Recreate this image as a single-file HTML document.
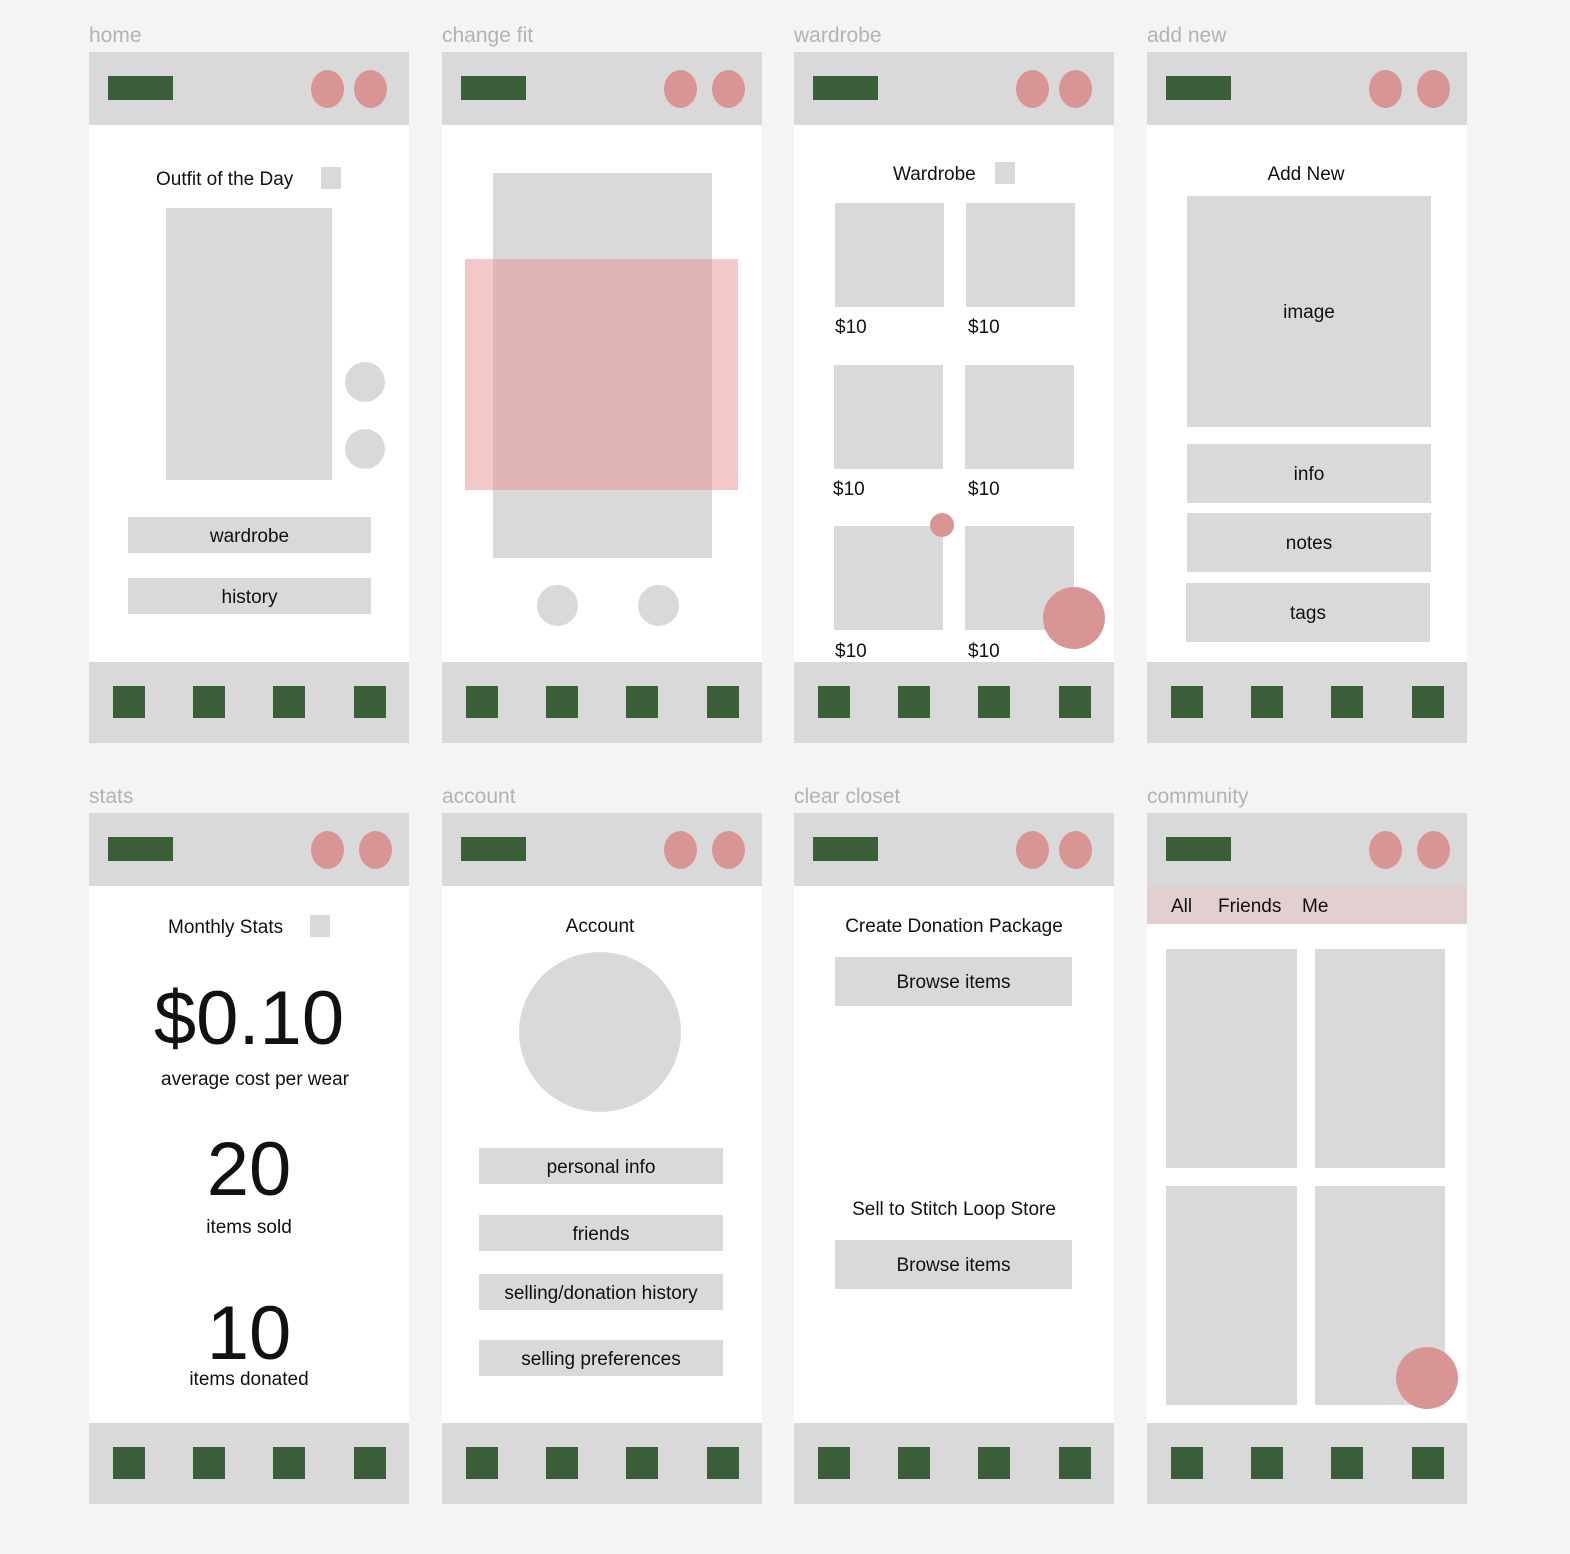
<!DOCTYPE html>
<html><head><meta charset="utf-8"><style>
*{margin:0;padding:0;box-sizing:border-box}
body{width:1570px;height:1554px;background:#f4f4f4;position:relative;overflow:hidden;font-family:"Liberation Sans",sans-serif;color:#111}
.f{position:absolute;width:320px;height:691px;background:#fff}
.lbl{position:absolute;font-size:21px;color:#b3b3b3;top:-28px;left:0}
.hd{position:absolute;left:0;top:0;width:320px;height:73px;background:#d9d9d9}
.g{position:absolute;left:19px;top:24px;width:65px;height:24px;background:#3a5f38}
.o{position:absolute;top:18px;width:33px;height:38px;border-radius:50%;background:#d89594}
.bb{position:absolute;left:0;top:610px;width:320px;height:81px;background:#d9d9d9}
.sq{position:absolute;top:24px;width:32px;height:32px;background:#3a5f38}
.a{position:absolute}
.gr{position:absolute;background:#d9d9d9}
.t{position:absolute;font-size:19px;white-space:nowrap;line-height:22px;margin-top:2px}
.c{left:0;width:320px;text-align:center}
.btn{position:absolute;background:#d9d9d9;font-size:19px;display:flex;align-items:center;justify-content:center;padding-top:3px}
.ci{position:absolute;border-radius:50%;background:#d9d9d9}
.pk{position:absolute;border-radius:50%;background:#d89594}
</style></head><body>

<!-- home -->
<div class="f" style="left:89px;top:52px">
<div class="lbl">home</div>
<div class="hd"><div class="g"></div><div class="o" style="left:222px"></div><div class="o" style="left:265px"></div></div>
<div class="t" style="left:67px;top:115px">Outfit of the Day</div>
<div class="gr" style="left:232px;top:115px;width:20px;height:22px"></div>
<div class="gr" style="left:77px;top:156px;width:166px;height:272px"></div>
<div class="ci" style="left:256px;top:310px;width:40px;height:40px"></div>
<div class="ci" style="left:256px;top:377px;width:40px;height:40px"></div>
<div class="btn" style="left:39px;top:465px;width:243px;height:36px">wardrobe</div>
<div class="btn" style="left:39px;top:526px;width:243px;height:36px">history</div>
<div class="bb"><div class="sq" style="left:24px"></div><div class="sq" style="left:104px"></div><div class="sq" style="left:184px"></div><div class="sq" style="left:265px"></div></div>
</div>

<!-- change fit -->
<div class="f" style="left:442px;top:52px">
<div class="lbl">change fit</div>
<div class="hd"><div class="g"></div><div class="o" style="left:222px"></div><div class="o" style="left:270px"></div></div>
<div class="gr" style="left:51px;top:121px;width:219px;height:385px"></div>
<div class="a" style="left:23px;top:207px;width:273px;height:231px;background:rgba(230,145,145,0.5)"></div>
<div class="ci" style="left:95px;top:533px;width:41px;height:41px"></div>
<div class="ci" style="left:196px;top:533px;width:41px;height:41px"></div>
<div class="bb"><div class="sq" style="left:24px"></div><div class="sq" style="left:104px"></div><div class="sq" style="left:184px"></div><div class="sq" style="left:265px"></div></div>
</div>

<!-- wardrobe -->
<div class="f" style="left:794px;top:52px">
<div class="lbl">wardrobe</div>
<div class="hd"><div class="g"></div><div class="o" style="left:222px"></div><div class="o" style="left:265px"></div></div>
<div class="t" style="left:99px;top:110px">Wardrobe</div>
<div class="gr" style="left:201px;top:110px;width:20px;height:22px"></div>
<div class="gr" style="left:41px;top:151px;width:109px;height:104px"></div>
<div class="gr" style="left:172px;top:151px;width:109px;height:104px"></div>
<div class="gr" style="left:40px;top:313px;width:109px;height:104px"></div>
<div class="gr" style="left:171px;top:313px;width:109px;height:104px"></div>
<div class="gr" style="left:40px;top:474px;width:109px;height:104px"></div>
<div class="gr" style="left:171px;top:474px;width:109px;height:104px"></div>
<div class="t" style="left:41px;top:263px">$10</div><div class="t" style="left:174px;top:263px">$10</div>
<div class="t" style="left:39px;top:425px">$10</div><div class="t" style="left:174px;top:425px">$10</div>
<div class="t" style="left:41px;top:587px">$10</div><div class="t" style="left:174px;top:587px">$10</div>
<div class="pk" style="left:136px;top:461px;width:24px;height:24px"></div>
<div class="pk" style="left:249px;top:535px;width:62px;height:62px"></div>
<div class="bb"><div class="sq" style="left:24px"></div><div class="sq" style="left:104px"></div><div class="sq" style="left:184px"></div><div class="sq" style="left:265px"></div></div>
</div>

<!-- add new -->
<div class="f" style="left:1147px;top:52px">
<div class="lbl">add new</div>
<div class="hd"><div class="g"></div><div class="o" style="left:222px"></div><div class="o" style="left:270px"></div></div>
<div class="t" style="left:0;width:318px;text-align:center;top:110px">Add New</div>
<div class="btn" style="left:40px;top:144px;width:244px;height:231px">image</div>
<div class="btn" style="left:40px;top:392px;width:244px;height:59px">info</div>
<div class="btn" style="left:40px;top:461px;width:244px;height:59px">notes</div>
<div class="btn" style="left:39px;top:531px;width:244px;height:59px">tags</div>
<div class="bb"><div class="sq" style="left:24px"></div><div class="sq" style="left:104px"></div><div class="sq" style="left:184px"></div><div class="sq" style="left:265px"></div></div>
</div>

<!-- stats -->
<div class="f" style="left:89px;top:813px">
<div class="lbl">stats</div>
<div class="hd"><div class="g"></div><div class="o" style="left:222px"></div><div class="o" style="left:270px"></div></div>
<div class="t" style="left:79px;top:102px">Monthly Stats</div>
<div class="gr" style="left:221px;top:102px;width:20px;height:22px"></div>
<div class="t" style="left:0;width:320px;text-align:center;top:162px;font-size:76px;line-height:84px">$0.10</div>
<div class="t" style="left:6px;width:320px;text-align:center;top:254px">average cost per wear</div>
<div class="t c" style="top:313px;font-size:76px;line-height:84px">20</div>
<div class="t c" style="top:402px">items sold</div>
<div class="t c" style="top:477px;font-size:76px;line-height:84px">10</div>
<div class="t c" style="top:554px">items donated</div>
<div class="bb"><div class="sq" style="left:24px"></div><div class="sq" style="left:104px"></div><div class="sq" style="left:184px"></div><div class="sq" style="left:265px"></div></div>
</div>

<!-- account -->
<div class="f" style="left:442px;top:813px">
<div class="lbl">account</div>
<div class="hd"><div class="g"></div><div class="o" style="left:222px"></div><div class="o" style="left:270px"></div></div>
<div class="t" style="left:0;width:316px;text-align:center;top:101px">Account</div>
<div class="ci" style="left:77px;top:139px;width:162px;height:160px"></div>
<div class="btn" style="left:37px;top:335px;width:244px;height:36px">personal info</div>
<div class="btn" style="left:37px;top:402px;width:244px;height:36px">friends</div>
<div class="btn" style="left:37px;top:461px;width:244px;height:36px">selling/donation history</div>
<div class="btn" style="left:37px;top:527px;width:244px;height:36px">selling preferences</div>
<div class="bb"><div class="sq" style="left:24px"></div><div class="sq" style="left:104px"></div><div class="sq" style="left:184px"></div><div class="sq" style="left:265px"></div></div>
</div>

<!-- clear closet -->
<div class="f" style="left:794px;top:813px">
<div class="lbl">clear closet</div>
<div class="hd"><div class="g"></div><div class="o" style="left:222px"></div><div class="o" style="left:265px"></div></div>
<div class="t c" style="top:101px">Create Donation Package</div>
<div class="btn" style="left:41px;top:144px;width:237px;height:49px">Browse items</div>
<div class="t c" style="top:384px">Sell to Stitch Loop Store</div>
<div class="btn" style="left:41px;top:427px;width:237px;height:49px">Browse items</div>
<div class="bb"><div class="sq" style="left:24px"></div><div class="sq" style="left:104px"></div><div class="sq" style="left:184px"></div><div class="sq" style="left:265px"></div></div>
</div>

<!-- community -->
<div class="f" style="left:1147px;top:813px">
<div class="lbl">community</div>
<div class="hd"><div class="g"></div><div class="o" style="left:222px"></div><div class="o" style="left:270px"></div></div>
<div class="a" style="left:0;top:73px;width:320px;height:38px;background:#e2d0d0"></div>
<div class="t" style="left:24px;top:81px">All</div>
<div class="t" style="left:71px;top:81px">Friends</div>
<div class="t" style="left:155px;top:81px">Me</div>
<div class="gr" style="left:19px;top:136px;width:131px;height:219px"></div>
<div class="gr" style="left:168px;top:136px;width:130px;height:219px"></div>
<div class="gr" style="left:19px;top:373px;width:131px;height:219px"></div>
<div class="gr" style="left:168px;top:373px;width:130px;height:219px"></div>
<div class="pk" style="left:249px;top:534px;width:62px;height:62px"></div>
<div class="bb"><div class="sq" style="left:24px"></div><div class="sq" style="left:104px"></div><div class="sq" style="left:184px"></div><div class="sq" style="left:265px"></div></div>
</div>

</body></html>
